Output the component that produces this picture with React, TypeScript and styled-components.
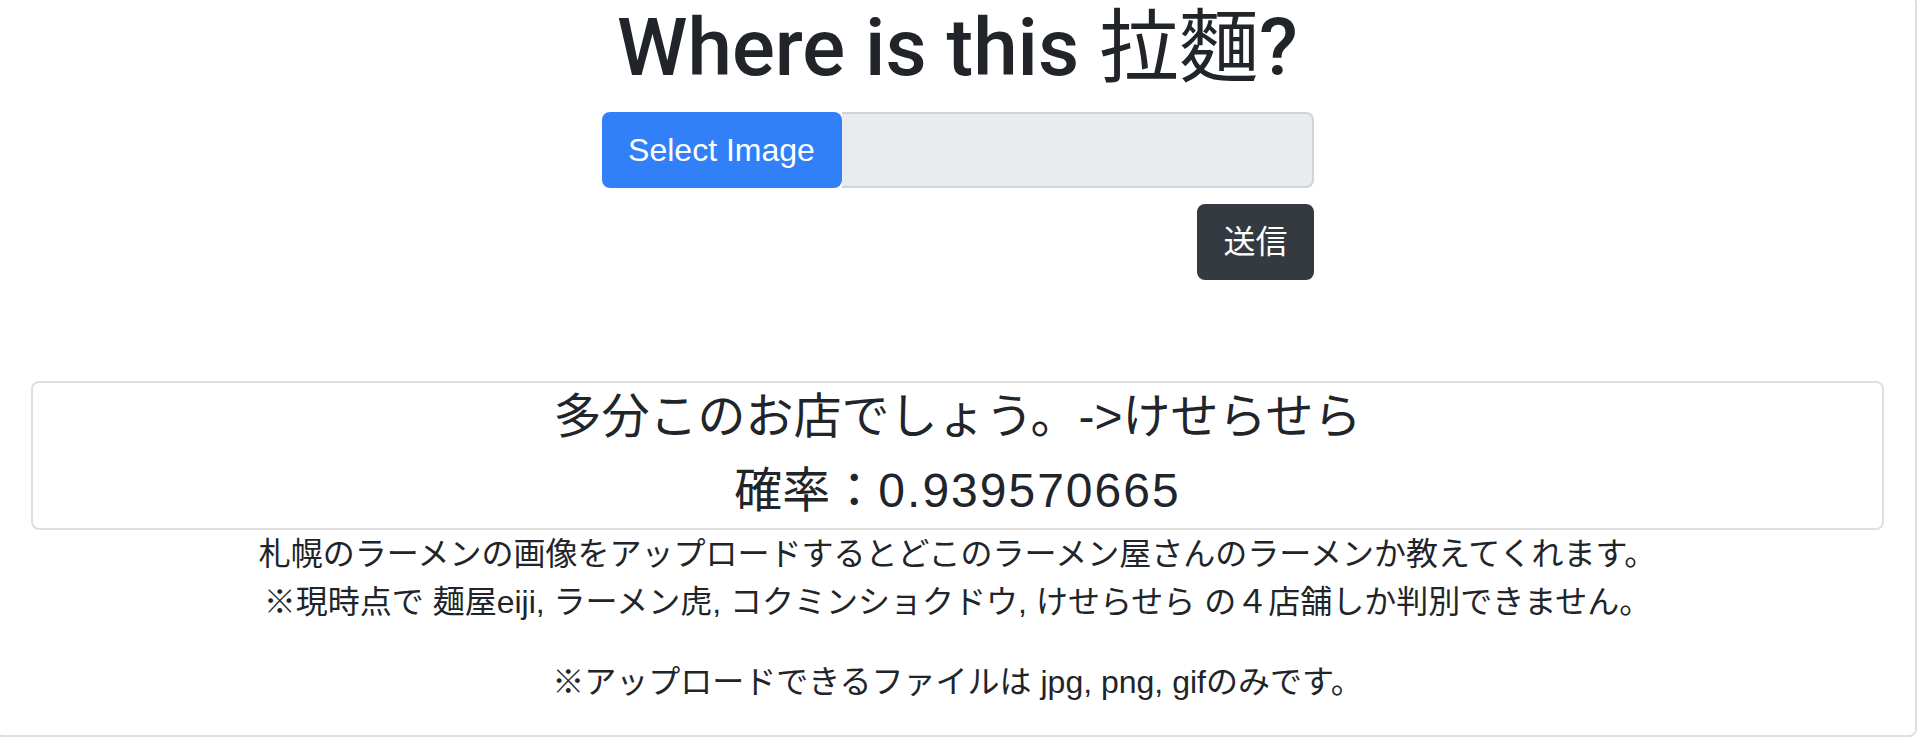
import React from "react";
import styled, { createGlobalStyle } from "styled-components";

const GlobalStyle = createGlobalStyle`
  html, body {
    margin: 0;
    padding: 0;
    background: #ffffff;
    overflow: hidden;
  }
  body {
    font-family: "Liberation Sans", "Noto Sans CJK JP", sans-serif;
    color: #212529;
  }
`;

const Card = styled.div`
  box-sizing: border-box;
  margin: -5px 0 0 -5px;
  width: 1922px;
  height: 742px;
  border: 2px solid #dfdfdf;
  border-radius: 8px;
  padding: 3px 31px 0 34px;
  display: flex;
  flex-direction: column;
  align-items: stretch;
`;

const Title = styled.h1`
  margin: 0 0 16px;
  font-family: Roboto, "Noto Sans CJK JP", sans-serif;
  font-size: 80px;
  line-height: 1.2;
  font-weight: 500;
  text-align: center;
  color: #212529;
`;

const TitleKanji = styled.span`
  font-weight: 400;
`;

const Form = styled.form`
  width: 712px;
  margin: 0 auto;
  display: flex;
  flex-direction: column;
  align-items: stretch;
`;

const InputGroup = styled.div`
  display: flex;
  height: 76px;
`;

const SelectButton = styled.label`
  box-sizing: border-box;
  display: flex;
  align-items: center;
  justify-content: center;
  width: 240px;
  background: #3180f7;
  color: #ffffff;
  font-size: 32px;
  border-radius: 8px;
  cursor: pointer;
`;

const FileField = styled.div`
  box-sizing: border-box;
  flex: 1;
  background: #e9ecef;
  border: 2px solid #ced4da;
  border-left: none;
  border-radius: 0 8px 8px 0;
`;

const SubmitRow = styled.div`
  display: flex;
  justify-content: flex-end;
  margin-top: 16px;
`;

const SubmitButton = styled.button`
  box-sizing: border-box;
  height: 76px;
  padding: 0 24px;
  background: #343a40;
  color: #ffffff;
  border: 2px solid #343a40;
  border-radius: 8px;
  font-family: "Liberation Sans", "Noto Sans CJK JP", sans-serif;
  font-size: 32px;
  line-height: 1.5;
`;

const ResultBox = styled.div`
  box-sizing: border-box;
  margin-top: 101px;
  border: 2px solid #dfdfdf;
  border-radius: 8px;
  padding: 5px 0 0;
  text-align: center;
`;

const ResultLine = styled.div`
  font-size: 48px;
  line-height: 1.2;
  margin-bottom: 16px;
  color: #212529;
  &:last-child {
    margin-bottom: 9px;
  }
`;

const Number = styled.span`
  letter-spacing: 2px;
`;

const Desc = styled.p`
  margin: 0 0 32px;
  font-size: 32px;
  line-height: 1.5;
  text-align: center;
  color: #212529;
`;

export default function App() {
  return (
    <>
      <GlobalStyle />
      <Card>
        <Title>
          Where is this <TitleKanji>拉麵</TitleKanji>?
        </Title>
        <Form onSubmit={(e) => e.preventDefault()}>
          <InputGroup>
            <SelectButton>Select Image</SelectButton>
            <FileField />
          </InputGroup>
          <SubmitRow>
            <SubmitButton type="submit">送信</SubmitButton>
          </SubmitRow>
        </Form>
        <ResultBox>
          <ResultLine>多分このお店でしょう。-&gt;けせらせら</ResultLine>
          <ResultLine>
            確率：<Number>0.939570665</Number>
          </ResultLine>
        </ResultBox>
        <Desc>
          札幌のラーメンの画像をアップロードするとどこのラーメン屋さんのラーメンか教えてくれます。
          <br />
          ※現時点で 麺屋eiji, ラーメン虎, コクミンショクドウ, けせらせら の４店舗しか判別できません。
        </Desc>
        <Desc>※アップロードできるファイルは jpg, png, gifのみです。</Desc>
      </Card>
    </>
  );
}
